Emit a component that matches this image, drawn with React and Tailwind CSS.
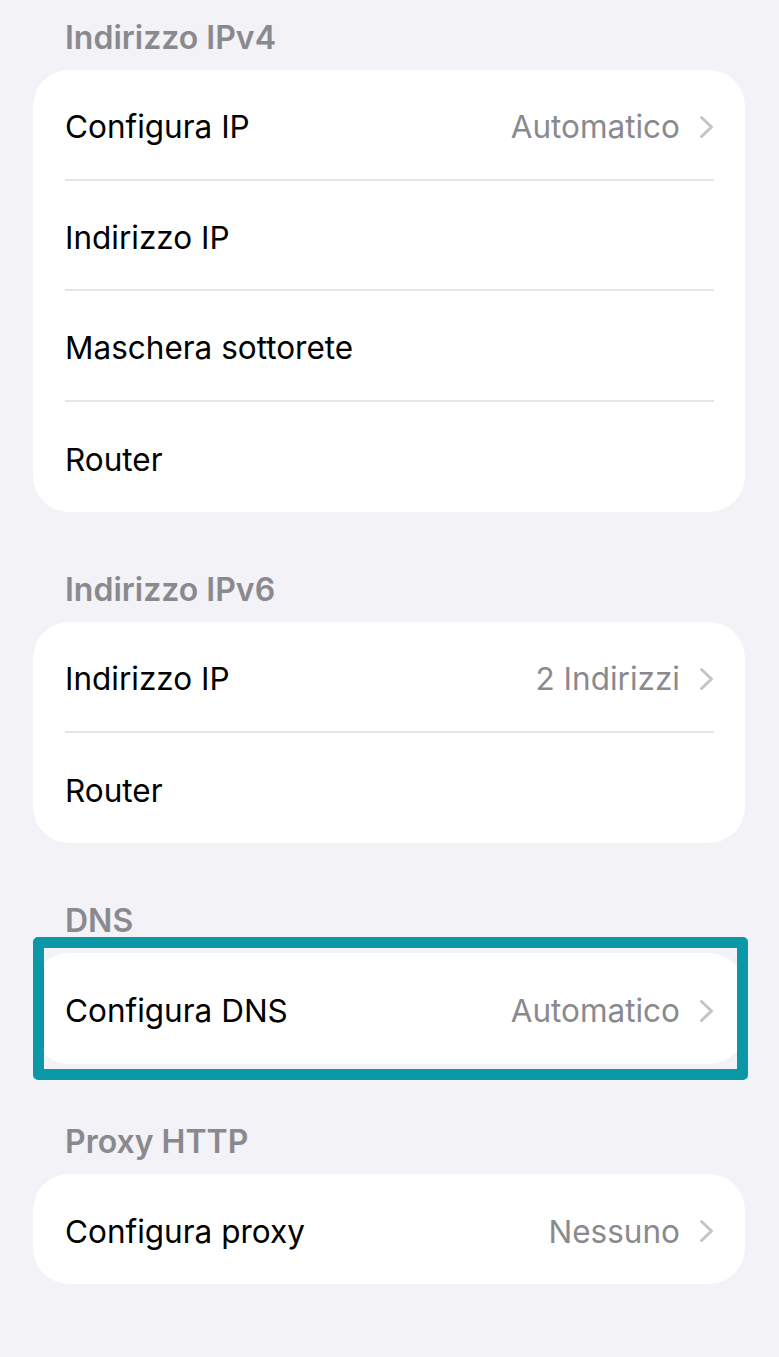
import React from 'react';

const sections = [
  {
    title: 'Indirizzo IPv4',
    rows: [
      { label: 'Configura IP', value: 'Automatico', link: true },
      { label: 'Indirizzo IP' },
      { label: 'Maschera sottorete' },
      { label: 'Router' },
    ],
  },
  {
    title: 'Indirizzo IPv6',
    rows: [
      { label: 'Indirizzo IP', value: '2 Indirizzi', link: true },
      { label: 'Router' },
    ],
  },
  {
    title: 'DNS',
    highlight: true,
    rows: [{ label: 'Configura DNS', value: 'Automatico', link: true }],
  },
  {
    title: 'Proxy HTTP',
    rows: [{ label: 'Configura proxy', value: 'Nessuno', link: true }],
  },
];

const Chevron = () => (
  <svg width="15" height="24" viewBox="0 0 15 24" fill="none" className="shrink-0">
    <path d="M2.5 2.5 L12.5 12 L2.5 21.5" stroke="#c4c4c8" strokeWidth="3" strokeLinecap="round" strokeLinejoin="round" />
  </svg>
);

const Row = ({ row, last }) => (
  <div className="h-[110.5px] pl-[32px] pr-[31px]">
    <div className={`h-full pt-[5px] flex items-center justify-between ${last ? '' : 'border-b-2 border-[#e4e4e9]'}`}>
      <span className="text-[31.5px] text-black">{row.label}</span>
      {row.link && (
        <div className="flex items-center gap-[19px]">
          <span className="text-[31.5px] text-[#8a8a8e]">{row.value}</span>
          <Chevron />
        </div>
      )}
    </div>
  </div>
);

const Section = ({ section, first }) => (
  <div className={first ? '' : 'mt-[58px]'}>
    <div className="pl-[32px] mb-[12px] leading-[40px] text-[32px] font-semibold text-[#8a8a8e]">
      {section.title}
    </div>
    <div className="relative">
      <div className="bg-white rounded-[36px] overflow-hidden">
        {section.rows.map((row, i) => (
          <Row key={i} row={row} last={i === section.rows.length - 1} />
        ))}
      </div>
      {/* teal outline drawn over the DNS card */}
      {section.highlight && (
        <div className="absolute -top-[16px] -bottom-[16px] left-0 -right-[3px] border-[11px] border-[#0a98a6] rounded-[5px] pointer-events-none" />
      )}
    </div>
  </div>
);

export default function App() {
  return (
    <div
      className="min-h-screen w-full bg-[#f2f2f7] pt-[18px] pl-[33px] pr-[34px]"
      style={{ fontFamily: 'Inter, "Noto Sans", sans-serif' }}
    >
      {sections.map((s, i) => (
        <Section key={s.title} section={s} first={i === 0} />
      ))}
    </div>
  );
}
